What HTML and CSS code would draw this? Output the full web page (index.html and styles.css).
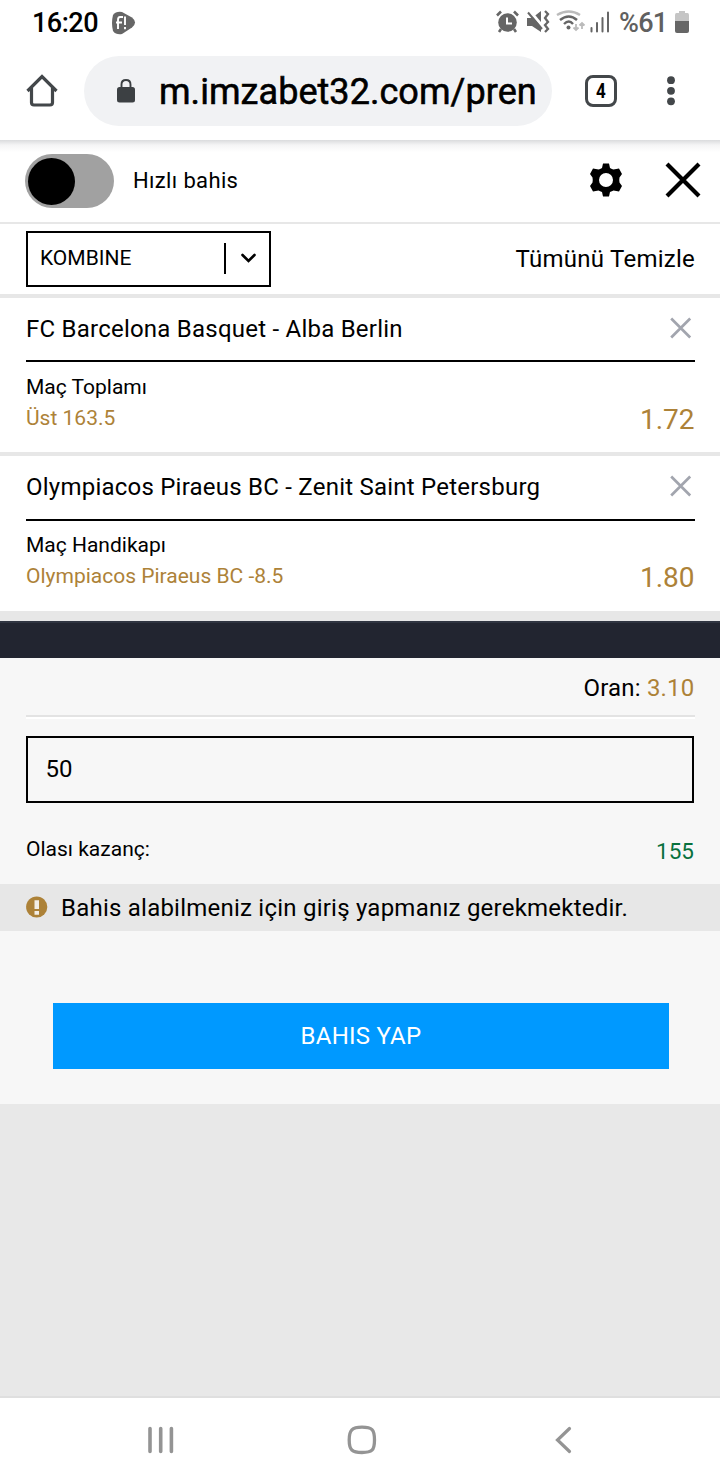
FILE: index.html
```html
<!DOCTYPE html>
<html lang="tr">
<head>
<meta charset="utf-8">
<title>Bahis kuponu</title>
<link rel="stylesheet" href="styles.css">
</head>
<body>
<header class="status">
  <span class="clock">16:20</span>
  <svg class="app-icon" width="24" height="24" viewBox="0 0 24 24"><path d="M1 4Q4 0 10 1L20 6.500Q26 11.500 20 16.500L10 23Q4 24 1 20Q-1 12 1 4Z" fill="#666"/><path d="M11 6H8Q6 6 6 9V18M4 11.500H10M13 5.500V14M13 16V18.300" fill="none" stroke="#fff" stroke-width="1.900"/></svg>
  <svg class="status-icons" width="116" height="24" viewBox="0 0 116 24">
    <g fill="none" stroke="#666" stroke-width="2">
      <circle cx="11.500" cy="12.500" r="9.300" fill="#666" stroke="none"/>
      <path d="M1 5.500L5 1.500M18 1.500L22 5.500M5 19L3 22M18 19L20 22" stroke-width="2.600"/><path d="M11 7.500V13.500H16" stroke="#fff"/>
      <path d="M31 8H36L45 1V22L36 16H31Z" fill="#666" stroke="none"/>
      <path d="M33 0L48 18" stroke="#fff" stroke-width="3"/><path d="M32 2.500L46 19"/>
      <path d="M49 1L52 4L49 8L52 12L49 15L52 19L49 22" stroke-width="2.300"/>
      <path d="M61 5Q73-2 84 5" stroke="#bbb" stroke-width="2.500"/><path d="M64 10Q73 3 81 10" stroke-width="2.500"/><path d="M68 14Q73 9 77 14" stroke-width="2.300"/><circle cx="72.500" cy="17.500" r="2" fill="#666" stroke="none"/>
      <path d="M80 14V20M77.500 17.500L80 20L82.500 17.500M86 19V13M83.500 15.500L86 13L88.500 15.500" stroke="#bbb" stroke-width="1.800"/>
      <path d="M95.500 18V21.500M101 13V21.500M106.500 8V21.500M112 2.500V21.500" stroke-linecap="round"/>
    </g>
  </svg>
  <span class="percent">%61</span>
  <svg class="battery" width="14" height="22" viewBox="0 0 14 22"><path d="M4 0H10V2H12.500Q14 2 14 4V10H0V4Q0 2 1.500 2H4Z" fill="#c5c5c5"/><path d="M0 10H14V20Q14 22 12 22H2Q0 22 0 20Z" fill="#666"/></svg>
</header>
<nav class="browser">
  <svg class="home" width="32" height="34" viewBox="0 0 32 34"><path d="M1.500 17L16 2.500L30.500 17M5.500 14V28.500Q5.500 31 8 31H24Q26.500 31 26.500 28.500V14" fill="none" stroke="#43474a" stroke-width="3.200"/></svg>
  <div class="address">
    <svg class="lock" width="18" height="24" viewBox="0 0 18 24"><rect x="0" y="8" width="18" height="15.500" rx="2.500" fill="#3c4043"/><path d="M4.500 9V5.500Q4.500 1 9 1T13.500 5.500V9" fill="none" stroke="#3c4043" stroke-width="1.900"/></svg>
    <span class="url">m.imzabet32.com/pren</span>
  </div>
  <span class="tabs"><span class="tab-count">4</span></span>
  <svg class="dots" width="8" height="30" viewBox="0 0 8 30"><g fill="#43474a"><circle cx="4" cy="4.200" r="3.900"/><circle cx="4" cy="14.800" r="3.900"/><circle cx="4" cy="25.300" r="3.900"/></g></svg>
</nav>
<main>
  <section class="quick">
    <span class="toggle"><span class="knob"></span></span>
    <span class="quick-label">Hızlı bahis</span>
    <svg class="gear" width="34" height="34" viewBox="0 0 34 34"><path fill-rule="evenodd" d="M14 0.500H20L21 5Q23 6 24.500 6.500L30 5.500L33 11L30.500 14.500Q30 17 30.500 19.500L33 23L30 28.500L24.500 27.500Q23 28 21 29L20 33.500H14L13 29Q11 28 9.500 27.500L4 28.500L1 23L3.500 19.500Q4 17 3.500 14.500L1 11L4 5.500L9.500 6.500Q11 6 13 5ZM17 10A7 7 0 1 0 17 24A7 7 0 1 0 17 10Z"/></svg>
    <svg class="close" width="36" height="36" viewBox="0 0 36 36"><path d="M2 2L34 34M34 2L2 34" stroke="#000" stroke-width="4.200"/></svg>
  </section>
  <section class="mode">
    <div class="select"><span class="select-text">KOMBINE</span><span class="bar"></span><svg width="16" height="10" viewBox="0 0 16 10"><path d="M2.500 2L8.500 8L14.500 2" fill="none" stroke="#000" stroke-width="2.600" stroke-linecap="round"/></svg></div>
    <span class="clear">Tümünü Temizle</span>
  </section>
  <article class="bet">
    <div class="teams"><span class="team-text">FC Barcelona Basquet - Alba Berlin</span><svg class="remove" width="22" height="22" viewBox="0 0 22 22"><path d="M1.200 1.500L20.200 20.500M20.200 1.500L1.200 20.500" stroke="#a2a5ae" stroke-width="2.700"/></svg></div>
    <div class="detail"><div class="market"><span>Maç Toplamı</span><span class="pick">Üst 163.5</span></div><span class="odd">1.72</span></div>
  </article>
  <article class="bet second">
    <div class="teams"><span class="team-text">Olympiacos Piraeus BC - Zenit Saint Petersburg</span><svg class="remove" width="22" height="22" viewBox="0 0 22 22"><path d="M1.200 1.500L20.200 20.500M20.200 1.500L1.200 20.500" stroke="#a2a5ae" stroke-width="2.700"/></svg></div>
    <div class="detail"><div class="market"><span>Maç Handikapı</span><span class="pick">Olympiacos Piraeus BC -8.5</span></div><span class="odd">1.80</span></div>
  </article>
  <div class="strip"></div>
  <section class="stake">
    <div class="total"><span>Oran: <b>3.10</b></span></div>
    <div class="amount">50</div>
    <div class="gain"><span>Olası kazanç:</span><span class="gain-value">155</span></div>
    <div class="notice"><svg width="22" height="22" viewBox="0 0 22 22"><circle cx="10.700" cy="11" r="10.600" fill="#ad8238"/><path d="M8.500 4.300H13V13H8.500ZM8.500 15H13V18.700H8.500Z" fill="#f3eee5"/></svg><span>Bahis alabilmeniz için giriş yapmanız gerekmektedir.</span></div>
    <div class="submit">BAHIS YAP</div>
  </section>
</main>
<footer class="system">
  <svg width="26" height="28" viewBox="0 0 26 28"><path d="M2 2.500V25.500M12.700 2.500V25.500M23.400 2.500V25.500" stroke="#949494" stroke-width="3.600" stroke-linecap="round"/></svg>
  <svg width="30" height="30" viewBox="0 0 30 30"><path d="M15 2.200C25 2.200 27.500 4.500 27.500 15S25 27.500 15 27.500S2.200 25 2.200 15S5 2.200 15 2.200Z" fill="none" stroke="#949494" stroke-width="3.300"/></svg>
  <svg width="18" height="28" viewBox="0 0 18 28"><path d="M15.500 2.500L3.500 14L15.500 25.500" fill="none" stroke="#949494" stroke-width="3.200" stroke-linecap="round"/></svg>
</footer>
</body>
</html>
```
FILE: styles.css
```css
* { box-sizing: border-box; }
body { margin: 0; width: 720px; height: 1480px; display: flex; flex-direction: column; background: #e8e8e8; color: #000; font-family: Roboto, "Liberation Sans", sans-serif; white-space: nowrap; overflow: hidden; }
svg { display: block; flex: none; }
.status { display: flex; align-items: center; height: 46px; padding-left: 32px; background: #fff; }
.clock { width: 80px; font-size: 27px; line-height: 46px; font-weight: 500; letter-spacing: -.5px; }
.app-icon { margin-top: -1px; }
.status-icons { margin-left: 360px; margin-top: -2px; }
.percent { width: 56px; margin-left: 7px; font-size: 27px; line-height: 46px; font-weight: 500; color: #606060; letter-spacing: -.7px; }
.battery { margin-top: -2px; }
.browser { display: flex; align-items: center; height: 94px; padding: 0 0 4px 26px; background: #fff; }
.address { display: flex; align-items: center; width: 468px; height: 70px; margin-left: 26px; padding: 0 16px 0 33px; border-radius: 35px; background: #f1f2f4; }
.url { width: 377px; margin-left: 24px; padding-top: 2px; overflow: hidden; font-size: 36px; line-height: 49px; letter-spacing: .05px; -webkit-text-stroke: .6px #000; text-shadow: 0 0 2px #fff, 0 0 2px #fff; }
.tabs { width: 32px; height: 32px; margin-left: 33px; border: 3.5px solid #43474a; border-radius: 8px; font-size: 20px; font-weight: 700; line-height: 26px; text-align: center; }
.tab-count { display: block; transform: scaleX(.85); }
.dots { margin-left: 50px; }
.quick { display: flex; align-items: center; height: 84px; padding-left: 25px; border-bottom: 2px solid #e7e7e7; background: linear-gradient(#dadbdd 0, #f4f4f5 5px, #fff 12px); }
.toggle { width: 89px; height: 54px; padding: 4px 3px; border-radius: 27px; background: #a1a1a1; }
.knob { display: block; width: 47px; height: 47px; border-radius: 50%; background: #000; }
.quick-label { width: 455.5px; margin-left: 19px; padding-bottom: 2px; font-size: 22px; letter-spacing: .35px; }
.gear { margin-top: -3px; }
.close { margin-left: 42px; margin-top: -3px; }
.mode { display: flex; align-items: center; justify-content: space-between; height: 74px; padding: 0 25px 0 26px; border-bottom: 4px solid #e7e7e7; background: #fff; }
.select { display: flex; align-items: center; width: 245px; height: 56px; border: 2px solid #000; padding: 0 0 2px 12px; font-size: 21px; }
.select-text { width: 184px; }
.bar { width: 2px; height: 31px; margin-right: 14px; background: #000; }
.clear { font-size: 24px; letter-spacing: .25px; }
.bet { height: 158px; padding: 0 25px 0 26px; border-bottom: 4px solid #e7e7e7; background: #fff; }
.second { height: 155px; border-bottom: 0; }
.teams { display: flex; align-items: center; justify-content: space-between; height: 64px; padding-right: 3px; border-bottom: 2px solid #000; font-size: 24px; letter-spacing: .23px; }
.remove { margin-top: -2px; }
.second .teams { height: 65px; padding-bottom: 2px; }
.detail { display: flex; justify-content: space-between; padding-top: 10px; }
.second .detail { padding-top: 9px; }
.market { display: flex; flex-direction: column; font-size: 21px; line-height: 31px; }
.pick, .odd, .total b { color: #ad8238; }
.odd { margin: 32px .5px 0 0; font-size: 28px; line-height: 32px; }
.strip { height: 47px; border-top: 10px solid #e7e7e7; background: linear-gradient(#303541 2px, #222530 2px); }
.stake { height: 446px; background: #f7f7f7; }
.total { display: flex; justify-content: flex-end; height: 59px; margin: 0 25px 0 26px; padding-right: .5px; border-bottom: 2px solid #e3e3e3; box-shadow: 0 2px #fff; font-size: 24px; line-height: 60px; letter-spacing: .2px; }
.total b { font-weight: 400; }
.amount { width: 668px; height: 67px; margin: 19px 0 0 26px; border: 2px solid #000; padding-left: 17.5px; font-size: 24px; line-height: 63px; }
.gain { display: flex; justify-content: space-between; height: 81px; padding: 0 26px; font-size: 21px; line-height: 92px; }
.gain-value { color: #08713d; font-size: 22.5px; line-height: 97px; }
.notice { display: flex; align-items: center; gap: 13px; height: 47px; padding-left: 26px; background: #e7e7e7; font-size: 24px; line-height: 48px; letter-spacing: .23px; }
.notice svg { margin-top: -1px; }
.submit { width: 616px; height: 66px; margin: 72px 0 0 53px; background: #0099ff; color: #fff; font-size: 24px; line-height: 66px; letter-spacing: .25px; text-align: center; }
.system { display: flex; align-items: center; height: 84px; margin-top: auto; padding: 2px 0 0 147.500px; border-top: 2px solid #dfdfdf; background: #fff; gap: 173px; }
.system svg:last-child { margin-left: 4.500px; }
```
